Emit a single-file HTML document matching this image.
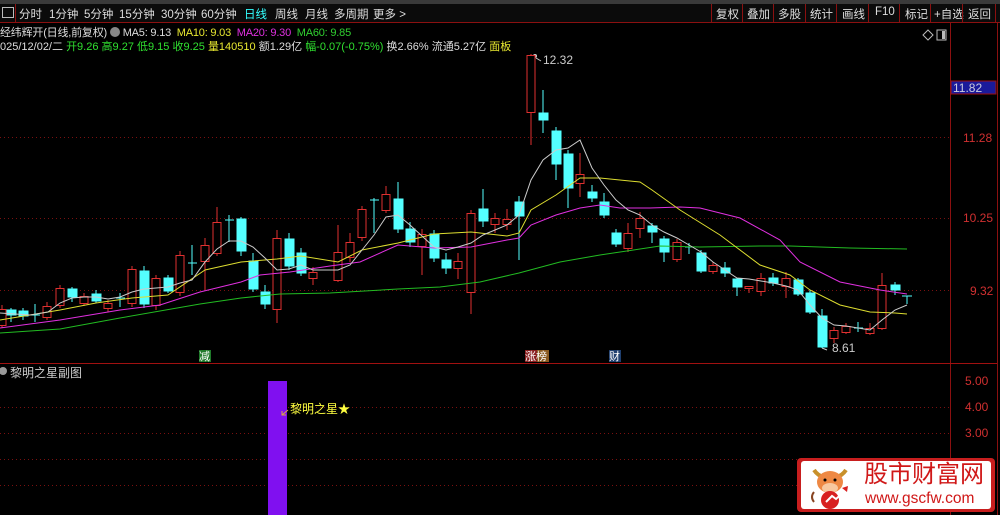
<!DOCTYPE html>
<html><head><meta charset="utf-8"><style>
html,body{margin:0;padding:0;background:#000;width:1000px;height:515px;overflow:hidden;font-family:"Liberation Sans","Noto Sans CJK SC",sans-serif}
.t{position:absolute;white-space:nowrap;font-size:12px}
.tb span{position:absolute;top:0}
</style></head><body>
<div style="position:absolute;left:0;top:0;width:1000px;height:4px;background:#3a3a3a"></div>
<div style="position:absolute;left:0;top:4px;width:1000px;height:18px;background:#0b0b0b;border-bottom:1px solid #8b1010"></div>
<div class="t" style="left:2px;top:7px;width:10px;height:9px;border:1px solid #bbb;"></div>
<div style="position:absolute;left:15px;top:4px;width:1px;height:18px;background:#8b1010"></div>
<div class="t tb" style="left:0;top:6px;color:#ddd;font-size:11.5px">
<span style="left:19px">分时</span><span style="left:49px">1分钟</span><span style="left:84px">5分钟</span><span style="left:119px">15分钟</span><span style="left:161px">30分钟</span><span style="left:201px">60分钟</span><span style="left:244px;color:#3ff">日线</span><span style="left:275px">周线</span><span style="left:305px">月线</span><span style="left:334px">多周期</span><span style="left:373px">更多 &gt;</span></div>
<div class="t tb" style="left:716px;top:6px;color:#ddd;font-size:11.5px">
<span style="left:0">复权</span><span style="left:31px">叠加</span><span style="left:62px">多股</span><span style="left:94px">统计</span><span style="left:126px">画线</span><span style="left:159px">F10</span><span style="left:189px">标记</span><span style="left:218px">+自选</span><span style="left:252px">返回</span></div>
<svg style="position:absolute;left:0;top:0" width="1000" height="515">
<g stroke="#8b1010" stroke-width="1">
<line x1="711.5" y1="4" x2="711.5" y2="22"/><line x1="742.5" y1="4" x2="742.5" y2="22"/><line x1="773.5" y1="4" x2="773.5" y2="22"/><line x1="805.5" y1="4" x2="805.5" y2="22"/><line x1="836.5" y1="4" x2="836.5" y2="22"/><line x1="868.5" y1="4" x2="868.5" y2="22"/><line x1="899.5" y1="4" x2="899.5" y2="22"/><line x1="930.5" y1="4" x2="930.5" y2="22"/><line x1="962.5" y1="4" x2="962.5" y2="22"/><line x1="995.5" y1="4" x2="995.5" y2="22"/>
<line x1="950.5" y1="22" x2="950.5" y2="515"/><line x1="997.5" y1="22" x2="997.5" y2="515"/>
<line x1="0" y1="363.5" x2="997" y2="363.5" stroke="#a01010"/>
</g>
<g stroke="#7a1010" stroke-dasharray="1,3">
<line x1="0" y1="137.5" x2="950" y2="137.5"/><line x1="0" y1="218.5" x2="950" y2="218.5"/><line x1="0" y1="290.5" x2="950" y2="290.5"/>
<line x1="0" y1="407.5" x2="950" y2="407.5"/><line x1="0" y1="433.5" x2="950" y2="433.5"/><line x1="0" y1="459.5" x2="950" y2="459.5"/><line x1="0" y1="485.5" x2="950" y2="485.5"/>
</g>
<rect x="951" y="81" width="45" height="13" fill="#1a1a9a" stroke="#a01010"/>
<g font-size="12" font-family="Liberation Sans,sans-serif">
<text x="953" y="92" fill="#ccd">11.82</text>
<text x="963" y="142" fill="#d03030">11.28</text>
<text x="963" y="222" fill="#d03030">10.25</text>
<text x="970" y="295" fill="#d03030">9.32</text>
<text x="965" y="385" fill="#d03030">5.00</text>
<text x="965" y="411" fill="#d03030">4.00</text>
<text x="965" y="437" fill="#d03030">3.00</text>
<text x="543" y="64" fill="#ccc">12.32</text>
<text x="832" y="352" fill="#ccc">8.61</text>
</g>
<path d="M536 58 l5 3" stroke="#ccc"/><circle cx="535" cy="56" r="2" fill="#ccc"/>
<path d="M822 348 l5 2" stroke="#ccc"/>
<path d="M928 30 l5 5 -5 5 -5 -5z" fill="none" stroke="#bbb"/>
<rect x="937" y="30" width="9" height="10" fill="none" stroke="#bbb"/><rect x="942" y="31" width="3" height="8" fill="#bbb"/>
<g stroke-width="1">
<g stroke="#e03030" fill="#000">
<line x1="2" y1="305" x2="2" y2="328"/><rect x="-2" y="309.5" width="8" height="16"/>
<line x1="47" y1="302" x2="47" y2="320"/><rect x="43" y="306.5" width="8" height="11"/>
<line x1="60" y1="285" x2="60" y2="308"/><rect x="56" y="288.5" width="8" height="17"/>
<line x1="84" y1="293" x2="84" y2="306"/><rect x="80" y="296.5" width="8" height="7"/>
<line x1="108" y1="300" x2="108" y2="312"/><rect x="104" y="303.5" width="8" height="5"/>
<line x1="132" y1="266" x2="132" y2="307"/><rect x="128" y="269.5" width="8" height="34"/>
<line x1="156" y1="275" x2="156" y2="310"/><rect x="152" y="278.5" width="8" height="27"/>
<line x1="180" y1="251" x2="180" y2="296"/><rect x="176" y="255.5" width="8" height="37"/>
<line x1="205" y1="238" x2="205" y2="290"/><rect x="201" y="245.5" width="8" height="16"/>
<line x1="217" y1="207" x2="217" y2="256"/><rect x="213" y="222.5" width="8" height="31"/>
<line x1="277" y1="230" x2="277" y2="323"/><rect x="273" y="238.5" width="8" height="71"/>
<line x1="313" y1="267" x2="313" y2="285"/><rect x="309" y="272.5" width="8" height="6"/>
<line x1="338" y1="225" x2="338" y2="282"/><rect x="334" y="252.5" width="8" height="28"/>
<line x1="350" y1="233" x2="350" y2="262"/><rect x="346" y="242.5" width="8" height="15"/>
<line x1="362" y1="206" x2="362" y2="241"/><rect x="358" y="209.5" width="8" height="28"/>
<line x1="386" y1="186" x2="386" y2="213"/><rect x="382" y="194.5" width="8" height="16"/>
<line x1="422" y1="229" x2="422" y2="275"/><rect x="418" y="234.5" width="8" height="12"/>
<line x1="458" y1="253" x2="458" y2="279"/><rect x="454" y="261.5" width="8" height="7"/>
<line x1="471" y1="210" x2="471" y2="314"/><rect x="467" y="213.5" width="8" height="79"/>
<line x1="495" y1="213" x2="495" y2="233"/><rect x="491" y="218.5" width="8" height="6"/>
<line x1="507" y1="209" x2="507" y2="230"/><rect x="503" y="219.5" width="8" height="5"/>
<line x1="531" y1="54" x2="531" y2="145"/><rect x="527" y="55.5" width="8" height="57"/>
<line x1="580" y1="153" x2="580" y2="197"/><rect x="576" y="174.5" width="8" height="9"/>
<line x1="628" y1="223" x2="628" y2="252"/><rect x="624" y="233.5" width="8" height="15"/>
<line x1="640" y1="212" x2="640" y2="238"/><rect x="636" y="218.5" width="8" height="10"/>
<line x1="677" y1="239" x2="677" y2="262"/><rect x="673" y="242.5" width="8" height="17"/>
<line x1="713" y1="262" x2="713" y2="274"/><rect x="709" y="265.5" width="8" height="6"/>
<line x1="749" y1="286" x2="749" y2="293"/><rect x="745" y="286.5" width="8" height="2"/>
<line x1="761" y1="273" x2="761" y2="296"/><rect x="757" y="278.5" width="8" height="13"/>
<line x1="786" y1="272" x2="786" y2="298"/><rect x="782" y="278.5" width="8" height="8"/>
<line x1="834" y1="327" x2="834" y2="343"/><rect x="830" y="330.5" width="8" height="8"/>
<line x1="846" y1="323" x2="846" y2="334"/><rect x="842" y="326.5" width="8" height="6"/>
<line x1="870" y1="323" x2="870" y2="335"/><rect x="866" y="328.5" width="8" height="5"/>
<line x1="882" y1="273" x2="882" y2="330"/><rect x="878" y="285.5" width="8" height="43"/>
</g>
<g stroke="#54ffff" fill="#54ffff">
<line x1="11" y1="308" x2="11" y2="322"/><rect x="7" y="310" width="9" height="5"/>
<line x1="23" y1="308" x2="23" y2="320"/><rect x="19" y="311" width="9" height="5"/>
<line x1="35" y1="304" x2="35" y2="322"/><line x1="31" y1="315" x2="40" y2="315"/>
<line x1="72" y1="287" x2="72" y2="302"/><rect x="68" y="289" width="9" height="8"/>
<line x1="96" y1="290" x2="96" y2="303"/><rect x="92" y="294" width="9" height="7"/>
<line x1="120" y1="293" x2="120" y2="307"/><line x1="116" y1="298" x2="125" y2="298"/>
<line x1="144" y1="266" x2="144" y2="308"/><rect x="140" y="271" width="9" height="33"/>
<line x1="168" y1="275" x2="168" y2="293"/><rect x="164" y="278" width="9" height="13"/>
<line x1="192" y1="245" x2="192" y2="275"/><line x1="188" y1="263" x2="197" y2="263"/>
<line x1="229" y1="215" x2="229" y2="242"/><line x1="225" y1="220" x2="234" y2="220"/>
<line x1="241" y1="217" x2="241" y2="256"/><rect x="237" y="219" width="9" height="32"/>
<line x1="253" y1="253" x2="253" y2="292"/><rect x="249" y="261" width="9" height="28"/>
<line x1="265" y1="285" x2="265" y2="309"/><rect x="261" y="292" width="9" height="12"/>
<line x1="289" y1="233" x2="289" y2="270"/><rect x="285" y="239" width="9" height="27"/>
<line x1="301" y1="248" x2="301" y2="276"/><rect x="297" y="253" width="9" height="20"/>
<line x1="374" y1="198" x2="374" y2="233"/><line x1="370" y1="200" x2="379" y2="200"/>
<line x1="398" y1="182" x2="398" y2="233"/><rect x="394" y="199" width="9" height="30"/>
<line x1="410" y1="222" x2="410" y2="247"/><rect x="406" y="229" width="9" height="13"/>
<line x1="434" y1="230" x2="434" y2="262"/><rect x="430" y="234" width="9" height="24"/>
<line x1="446" y1="253" x2="446" y2="274"/><rect x="442" y="260" width="9" height="8"/>
<line x1="483" y1="189" x2="483" y2="227"/><rect x="479" y="209" width="9" height="12"/>
<line x1="519" y1="196" x2="519" y2="260"/><rect x="515" y="202" width="9" height="14"/>
<line x1="543" y1="90" x2="543" y2="133"/><rect x="539" y="113" width="9" height="7"/>
<line x1="556" y1="127" x2="556" y2="180"/><rect x="552" y="131" width="9" height="33"/>
<line x1="568" y1="150" x2="568" y2="208"/><rect x="564" y="154" width="9" height="34"/>
<line x1="592" y1="185" x2="592" y2="202"/><rect x="588" y="192" width="9" height="6"/>
<line x1="604" y1="193" x2="604" y2="218"/><rect x="600" y="202" width="9" height="13"/>
<line x1="616" y1="229" x2="616" y2="247"/><rect x="612" y="233" width="9" height="11"/>
<line x1="652" y1="223" x2="652" y2="243"/><rect x="648" y="226" width="9" height="6"/>
<line x1="664" y1="236" x2="664" y2="262"/><rect x="660" y="239" width="9" height="13"/>
<line x1="689" y1="243" x2="689" y2="254"/><line x1="685" y1="247" x2="694" y2="247"/>
<line x1="701" y1="250" x2="701" y2="273"/><rect x="697" y="253" width="9" height="18"/>
<line x1="725" y1="262" x2="725" y2="277"/><rect x="721" y="268" width="9" height="5"/>
<line x1="737" y1="278" x2="737" y2="296"/><rect x="733" y="279" width="9" height="8"/>
<line x1="773" y1="273" x2="773" y2="286"/><rect x="769" y="278" width="9" height="5"/>
<line x1="798" y1="278" x2="798" y2="296"/><rect x="794" y="280" width="9" height="14"/>
<line x1="810" y1="290" x2="810" y2="314"/><rect x="806" y="293" width="9" height="19"/>
<line x1="822" y1="309" x2="822" y2="348"/><rect x="818" y="316" width="9" height="31"/>
<line x1="858" y1="322" x2="858" y2="332"/><line x1="854" y1="328" x2="863" y2="328"/>
<line x1="895" y1="282" x2="895" y2="295"/><rect x="891" y="285" width="9" height="5"/>
<line x1="907" y1="296" x2="907" y2="304"/><line x1="902" y1="296" x2="912" y2="296"/>
</g>
</g>
<g fill="none" stroke-width="1">
<polyline stroke="#22bb22" points="0,333 60,329 120,318 200,304 241,298 280,294 330,293 398,289 440,287 480,282 519,273 560,262 600,255 660,246 700,247 760,246 790,246 850,248 907,249"/>
<polyline stroke="#e030e0" points="0,328 60,320 120,310 160,305 200,292 241,282 260,275 290,272 330,266 360,262 398,245 434,248 471,247 507,240 519,238 531,225 556,215 580,208 600,205 620,208 650,208 680,207 700,208 740,218 780,240 800,262 840,282 880,290 907,294"/>
<polyline stroke="#dddd30" points="0,320 60,310 96,303 132,298 168,295 205,270 241,262 277,259 301,256 338,262 362,250 398,243 434,234 471,232 507,236 519,233 531,210 556,195 580,178 600,178 640,182 652,190 680,210 720,235 760,265 790,275 810,290 840,305 870,312 895,313 907,314"/>
<polyline stroke="#cccccc" points="0,313 30,315 48,312 60,303 72,298 84,297 96,297 108,299 120,297 132,292 144,289 156,288 168,287 180,283 192,280 205,262 217,249 229,241 241,241 253,247 265,258 277,270 289,269 301,265 313,270 325,270 338,270 350,265 362,250 374,235 386,217 398,215 410,225 422,236 434,247 446,250 458,247 471,243 483,235 495,230 507,225 519,215 531,180 543,160 556,150 568,148 580,140 592,168 604,185 616,200 628,210 640,215 652,225 664,232 677,238 689,245 701,252 713,262 725,270 737,278 749,279 761,281 773,283 786,286 798,290 810,305 822,318 834,325 846,326 858,328 870,330 882,320 895,310 907,305"/>
</g>
<rect x="199" y="350" width="12" height="12" fill="#1f7a2a"/>
<rect x="525" y="350" width="12" height="12" fill="#8a2020"/><rect x="537" y="350" width="12" height="12" fill="#8a5a20"/>
<rect x="609" y="350" width="12" height="12" fill="#1f3f6f"/>
<g font-size="11" font-family="Liberation Sans,Noto Sans CJK SC,sans-serif" fill="#fff">
<text x="199" y="360">减</text><text x="525" y="360">涨榜</text><text x="609" y="360">财</text>
</g>
<rect x="268" y="381" width="19" height="134" fill="#8010f0"/>
<circle cx="3" cy="371" r="4" fill="#999"/>
<path d="M288 410 l-6 5 M282 411 v4 h4" stroke="#ddaa40" fill="none"/>
</svg>
<div class="t" style="left:0;top:24px;color:#ddd;font-size:11px;letter-spacing:-0.2px">经纬辉开(日线,前复权) <span style="display:inline-block;width:10px;height:10px;border-radius:5px;background:#888;vertical-align:-1px"></span> MA5: 9.13 &nbsp;<span style="color:#e8e830">MA10: 9.03</span> &nbsp;<span style="color:#e030e0">MA20: 9.30</span> &nbsp;<span style="color:#30d030">MA60: 9.85</span></div>
<div class="t" style="left:0;top:38px;color:#ddd;font-size:11px;letter-spacing:0px">025/12/02/二 <span style="color:#30e030">开9.26 高9.27 低9.15 收9.25</span> <span style="color:#e8e830">量140510</span> 额1.29亿 <span style="color:#30e030">幅-0.07(-0.75%)</span> 换2.66% 流通5.27亿 <span style="color:#e8e830">面板</span></div>
<div class="t" style="left:10px;top:364px;color:#ccc">黎明之星副图</div>
<div class="t" style="left:290px;top:400px;color:#ffff40">黎明之星★</div>
<div style="position:absolute;left:797px;top:458px;width:198px;height:54px;background:#c81e1e;border-radius:4px"></div>
<div style="position:absolute;left:801px;top:461px;width:190px;height:48px;background:#fff;border-radius:3px"></div>
<svg style="position:absolute;left:806px;top:462px" width="60" height="48">
<path d="M8 8 q4 6 10 7 M40 8 q-4 6 -10 7" stroke="#c8902a" stroke-width="4" fill="none"/>
<ellipse cx="24" cy="20" rx="13" ry="11" fill="#ee8844"/>
<ellipse cx="24" cy="26" rx="8" ry="5" fill="#f8c8a0"/>
<circle cx="19" cy="18" r="1.5" fill="#000"/><circle cx="29" cy="18" r="1.5" fill="#000"/>
<circle cx="24" cy="38" r="9" fill="#d82020"/>
<path d="M20 40 l6 -6 4 3 10 -9" stroke="#fff" stroke-width="2" fill="none"/>
<path d="M36 26 l6 -2 -1 6z" fill="#d82020"/>
<path d="M8 30 q-4 5 0 10" stroke="#884422" stroke-width="2" fill="none"/>
</svg>
<div class="t" style="left:864px;top:461px;font-size:24px;line-height:28px;color:#d01818">股市财富网</div>
<div class="t" style="left:865px;top:490px;font-size:15.5px;line-height:18px;color:#d01818">www.gscfw.com</div>
</body></html>
